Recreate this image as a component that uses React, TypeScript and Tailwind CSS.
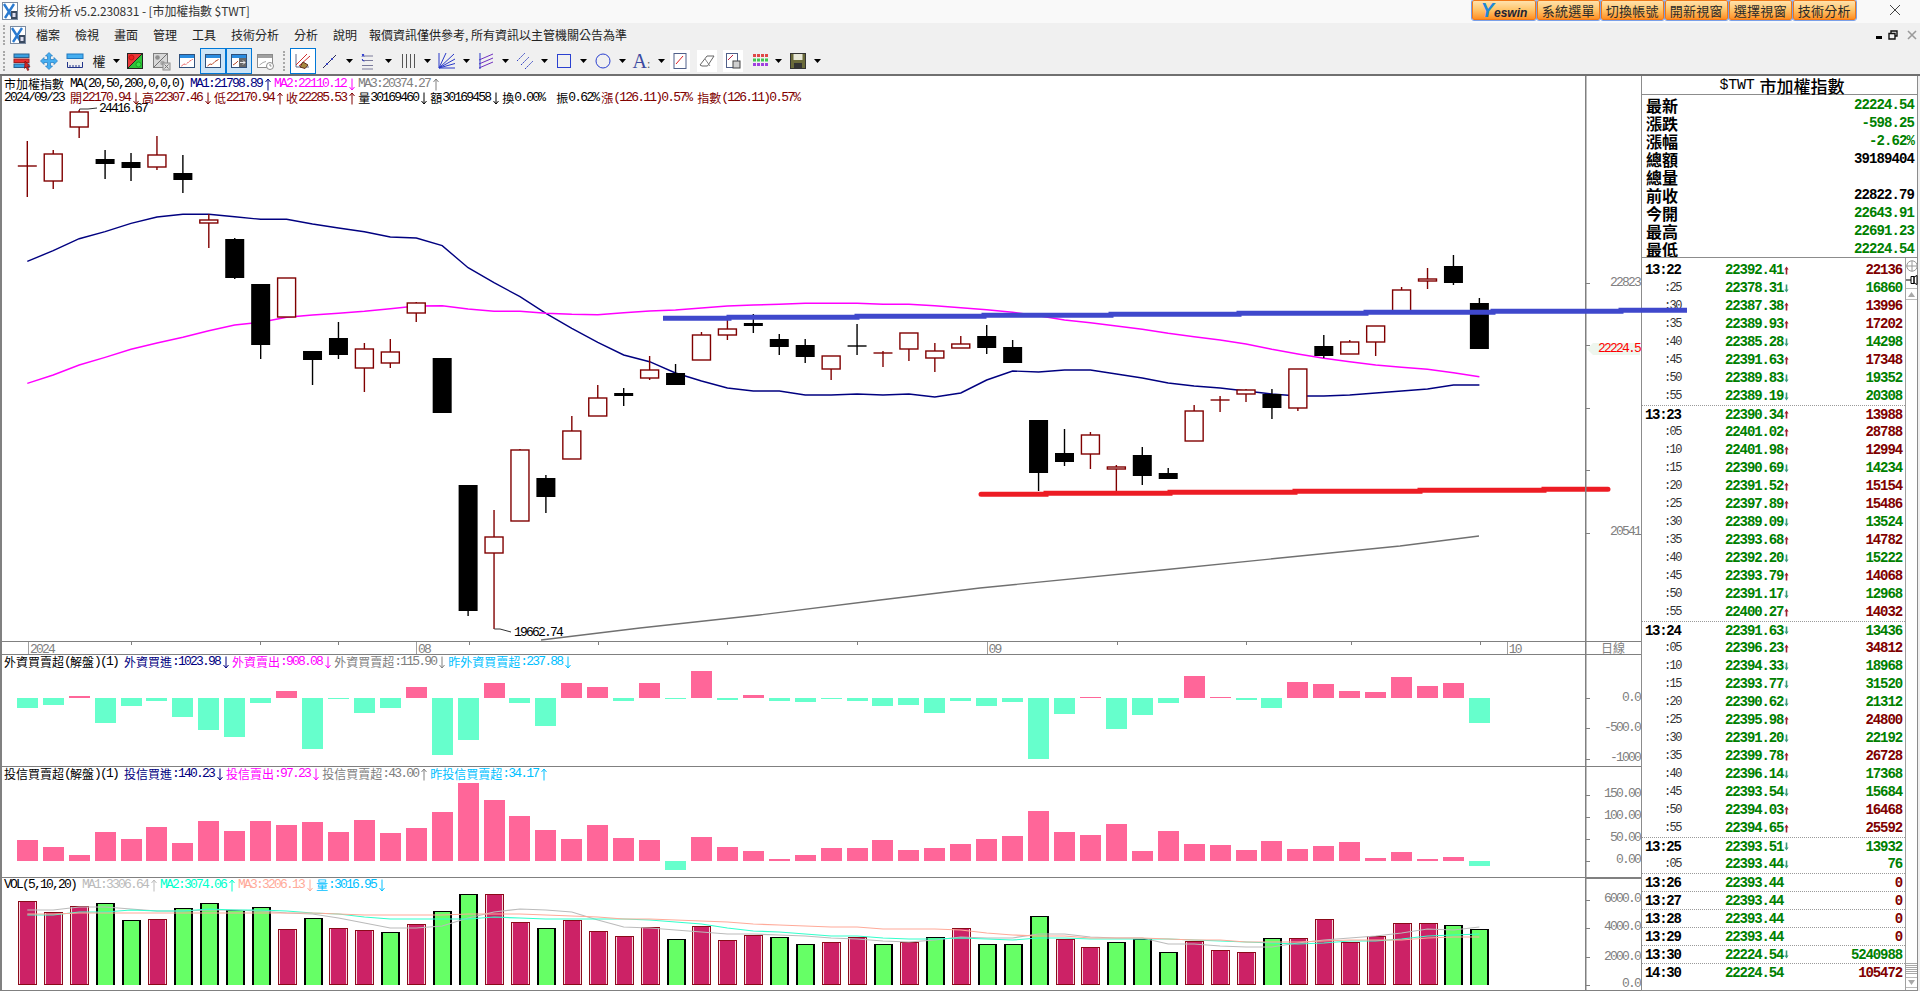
import type { ReactNode } from 'react';

const X = (i: number) => 27.3 + 25.93 * i;

type Candle = [number, number, number, number, 'r' | 'k'];

// high, body top, body bottom, low
const CANDLES: Candle[] = [
  [141, 166, 166, 197, 'r'], [150, 154, 181, 189, 'r'], [110, 112, 127, 138, 'r'], [150, 159, 164, 179, 'k'],
  [153, 162, 168, 181, 'k'], [136, 155, 167, 170, 'r'], [155, 173, 180, 193, 'k'], [214, 220, 223, 248, 'r'],
  [238, 239, 278, 279, 'k'], [284, 284, 345, 359, 'k'], [278, 278, 317, 317, 'r'], [351, 351, 360, 385, 'k'],
  [322, 338, 355, 359, 'k'], [343, 349, 368, 392, 'r'], [339, 352, 363, 368, 'r'], [302, 303, 313, 322, 'r'],
  [358, 358, 413, 413, 'k'], [485, 485, 611, 616, 'k'], [510, 537, 553, 629, 'r'], [449, 450, 521, 521, 'r'],
  [475, 478, 497, 513, 'k'], [416, 431, 459, 459, 'r'], [385, 398, 416, 416, 'r'], [388, 393, 396, 406, 'k'],
  [356, 370, 378, 380, 'r'], [364, 373, 385, 385, 'k'], [332, 335, 360, 360, 'r'], [320, 329, 335, 340, 'r'],
  [314, 323, 326, 333, 'k'], [334, 339, 347, 355, 'k'], [339, 345, 357, 363, 'k'], [356, 356, 369, 380, 'r'],
  [324, 346, 346, 355, 'k'], [351, 353, 353, 367, 'r'], [333, 333, 349, 361, 'r'], [343, 351, 358, 372, 'r'],
  [336, 344, 348, 348, 'r'], [325, 336, 348, 354, 'k'], [340, 347, 363, 363, 'k'], [420, 420, 473, 491, 'k'],
  [429, 453, 462, 466, 'k'], [432, 435, 454, 469, 'r'], [465, 467, 469, 491, 'r'], [447, 455, 476, 485, 'k'],
  [468, 473, 479, 479, 'k'], [405, 411, 441, 441, 'r'], [396, 400, 400, 412, 'r'], [389, 390, 394, 402, 'r'],
  [389, 394, 408, 419, 'k'], [369, 369, 408, 411, 'r'], [335, 346, 356, 358, 'k'], [340, 342, 354, 354, 'r'],
  [326, 326, 342, 356, 'r'], [287, 290, 312, 312, 'r'], [268, 279, 281, 289, 'r'], [255, 266, 283, 285, 'k'],
  [298, 303, 349, 349, 'k'],
];

const MA1 = [261.3, 250.7, 238.7, 231.7, 223.3, 217, 214.3, 214.3, 216.7, 219.3, 219.3, 224, 228, 231.7, 237, 238, 245.7, 267.7, 282.7, 296.7, 313.3, 328.3, 342.3, 355, 361.7, 373, 381, 388, 391, 391, 395, 395, 394, 395, 394, 397, 393, 380, 371, 372, 370, 370, 374, 378, 383, 386, 388, 391, 394, 396, 396, 395, 393, 391, 389, 385, 385];
const MA2 = [383.3, 375, 365, 357.3, 349.3, 343, 337.3, 330.7, 325, 322.3, 317.3, 315, 313.3, 311.3, 308.7, 306, 305.7, 309, 311.3, 311.3, 313.3, 314.3, 314.7, 312.7, 311, 310, 308, 306, 305, 304.3, 303.3, 303.3, 303.3, 304.3, 304.3, 305.7, 307.7, 309.7, 312.3, 315.7, 320, 322.7, 326, 329.3, 333.3, 336.7, 340, 344, 349.3, 354, 358.3, 361.7, 365, 367.3, 369.3, 372.7, 376.7];
const MA3 = '541,640 640,628 759,615 880,600 980,588 1162,570 1280,558 1400,546 1479,536';

const BLUE_STEPS = 'M663 318.3H729V317.3H857V316.3H984V315.3H1111V314.3H1239V313.3H1366V312.3H1493V311.3H1621V310.3H1687';
const RED_STEPS = 'M981 494.3H1046V493.3H1170V492.3H1295V491.3H1420V490.3H1544V489.3H1608';

// bar height in px, positive goes up from the zero line
const FOREIGN = [-10, -7, 2, -25, -8, -3, -19, -32, -39, -5, 7, -51, -1, -15, -10, 11, -57, -42, 15, -5, -28, 15, 11, -3, 15, -1, 27, -2, 3, -3, -4, -1, -3, -8, -7, -15, -3, -8, -4, -61, -16, 1, -31, -17, -5, 22, 1, -2, -10, 16, 14, 7, 6, 21, 12, 15, -25];
const TRUST = [21, 14, 6, 29, 22, 34, 18, 40, 30, 40, 36, 39, 29, 41, 28, 33, 49, 78, 61, 45, 31, 22, 36, 23, 21, -9, 24, 14, 10, 2, 6, 13, 13, 21, 11, 13, 17, 22, 25, 50, 29, 26, 37, 10, 30, 17, 16, 11, 20, 12, 15, 19, 3, 9, 2, 4, -5];

const VOL_TOPS = [901, 912, 906, 903, 920, 919, 908, 903, 910, 907, 929, 918, 928, 930, 932, 924, 911, 894, 894, 922, 928, 920, 931, 936, 927, 939, 926, 940, 935, 937, 944, 942, 937, 944, 942, 937, 928, 944, 944, 916, 939, 947, 942, 939, 952, 941, 950, 952, 938, 938, 919, 942, 936, 923, 923, 925, 929];
const VOL_GREEN = new Set([3, 4, 6, 7, 8, 9, 11, 14, 16, 17, 20, 25, 29, 30, 33, 35, 37, 38, 39, 42, 43, 44, 48, 55, 56]);
const VOL_MA1 = [910, 910, 907, 907, 909, 911, 911, 910, 910, 911, 913, 914, 918, 923, 928, 928, 926, 918, 912, 909, 910, 912, 920, 927, 928, 930, 932, 934, 934, 935, 936, 938, 939, 941, 942, 940, 937, 938, 938, 934, 934, 937, 938, 938, 944, 944, 946, 947, 947, 943, 940, 938, 936, 933, 929, 930, 927];
const VOL_MA2 = [915, 915, 912, 912, 910, 911, 911, 909, 910, 910, 911, 913, 914, 917, 919, 919, 919, 919, 917, 918, 919, 919, 919, 919, 920, 922, 924, 928, 931, 932, 934, 936, 936, 938, 939, 939, 938, 939, 940, 938, 938, 939, 939, 939, 939, 940, 941, 942, 943, 944, 943, 941, 941, 939, 936, 935, 934];
const VOL_MA3 = [914, 914, 913, 913, 913, 913, 913, 913, 913, 913, 913, 913, 914, 915, 915, 915, 915, 914, 914, 914, 915, 916, 917, 919, 919, 920, 921, 922, 924, 925, 926, 927, 927, 929, 929, 929, 930, 933, 935, 936, 936, 938, 938, 938, 939, 940, 940, 942, 942, 942, 941, 940, 940, 940, 938, 937, 937];

type Quote = [string, string, 'u' | 'd' | '', string];

const QUOTES: Quote[] = [
  ['13:22', '22392.41', 'u', '22136'], [':25', '22378.31', 'd', '16860'], [':30', '22387.38', 'u', '13996'], [':35', '22389.93', 'u', '17202'],
  [':40', '22385.28', 'd', '14298'], [':45', '22391.63', 'u', '17348'], [':50', '22389.83', 'd', '19352'], [':55', '22389.19', 'd', '20308'],
  ['13:23', '22390.34', 'u', '13988'], [':05', '22401.02', 'u', '28788'], [':10', '22401.98', 'u', '12994'], [':15', '22390.69', 'd', '14234'],
  [':20', '22391.52', 'u', '15154'], [':25', '22397.89', 'u', '15486'], [':30', '22389.09', 'd', '13524'], [':35', '22393.68', 'u', '14782'],
  [':40', '22392.20', 'd', '15222'], [':45', '22393.79', 'u', '14068'], [':50', '22391.17', 'd', '12968'], [':55', '22400.27', 'u', '14032'],
  ['13:24', '22391.63', 'd', '13436'], [':05', '22396.23', 'u', '34812'], [':10', '22394.33', 'd', '18968'], [':15', '22393.77', 'd', '31520'],
  [':20', '22390.62', 'd', '21312'], [':25', '22395.98', 'u', '24800'], [':30', '22391.20', 'd', '22192'], [':35', '22399.78', 'u', '26728'],
  [':40', '22396.14', 'd', '17368'], [':45', '22393.54', 'd', '15684'], [':50', '22394.03', 'u', '16468'], [':55', '22394.65', 'u', '25592'],
  ['13:25', '22393.51', 'd', '13932'], [':05', '22393.44', 'd', '76'], ['13:26', '22393.44', '', '0'], ['13:27', '22393.44', '', '0'],
  ['13:28', '22393.44', '', '0'], ['13:29', '22393.44', '', '0'], ['13:30', '22224.54', 'd', '5240988'], ['14:30', '22224.54', '', '105472'],
];

const SUMMARY: Array<[string, string, string]> = [
  ['最新', '22224.54', 'text-[#008000]'], ['漲跌', '-598.25', 'text-[#008000]'], ['漲幅', '-2.62%', 'text-[#008000]'],
  ['總額', '39189404', 'text-black'], ['總量', '', 'text-black'], ['前收', '22822.79', 'text-black'],
  ['今開', '22643.91', 'text-[#008000]'], ['最高', '22691.23', 'text-[#008000]'], ['最低', '22224.54', 'text-[#008000]'],
];

const MENU: Array<[string, string]> = [
  ['檔案', 'w-[39px]'], ['檢視', 'w-[39px]'], ['畫面', 'w-[39px]'], ['管理', 'w-[39px]'], ['工具', 'w-[39px]'],
  ['技術分析', 'w-[63px]'], ['分析', 'w-[39px]'], ['說明', 'w-[36px]'],
];

function HeadArrow({ dir }: { dir: string }) {
  return (
    <svg width={12} height={13} viewBox="0 0 12 13" className="inline-block shrink-0">
      {dir === '↑' ? (
        <path d="M6 1V12.5M3.5 4L6 1L8.5 4" fill="none" stroke="currentColor" />
      ) : (
        <path d="M6 0.5V12M3.5 9L6 12L8.5 9" fill="none" stroke="currentColor" />
      )}
    </svg>
  );
}

function Mixed({ text, className }: { text: string; className?: string }) {
  const parts = text.split(/([\u2190-\u2193]|[\u3000-\u9fff]+)/).filter(Boolean);
  return (
    <span className={`inline-flex items-center ${className ?? ''}`}>
      {parts.map((part, i) => {
        if (/^[\u2190-\u2193]$/.test(part)) return <HeadArrow key={i} dir={part} />;
        if (/^[\u3000-\u9fff]/.test(part)) {
          return (
            <span key={i} className="tracking-normal text-[12px] font-['Noto_Sans_CJK_TC',sans-serif]">
              {part}
            </span>
          );
        }
        return <span key={i}>{part}</span>;
      })}
    </span>
  );
}

function HeaderLine({ children }: { children: ReactNode }) {
  return (
    <div className="h-[14px] pl-[4px] flex items-center whitespace-pre text-[13px] leading-[14px] tracking-[-1.8px] font-['Liberation_Mono','Noto_Sans_CJK_TC',monospace]">
      {children}
    </div>
  );
}

function AxisText({ y, children, fill = '#808080' }: { y: number; children: string; fill?: string }) {
  return (
    <text x={1640} y={y} textAnchor="end" fill={fill} fontSize={13} letterSpacing={-1.8} className="font-['Liberation_Mono',monospace]">
      {children}
    </text>
  );
}

function Pane({ top, height, children, header }: { top: number; height: number; children: ReactNode; header?: ReactNode }) {
  return (
    <div className="relative shrink-0" style={{ height }}>
      <svg width={1641} height={height} viewBox={`0 ${top} 1641 ${height}`} className="block overflow-visible">
        {children}
        <rect x={0} y={top} width={2} height={height} fill="#808080" shapeRendering="crispEdges" />
        <rect x={1585} y={top} width={1.5} height={height} fill="#808080" />
        <rect x={0} y={top + height - 1} width={1641} height={1} fill="#808080" shapeRendering="crispEdges" />
      </svg>
      {header && <div className="absolute left-0 top-0">{header}</div>}
    </div>
  );
}

function Ticks({ ys }: { ys: number[] }) {
  return (
    <>
      {ys.map((y) => (
        <rect key={y} x={1586} y={y} width={4} height={1} fill="#808080" shapeRendering="crispEdges" />
      ))}
    </>
  );
}

function CandleMark({ c, i }: { c: Candle; i: number }) {
  const [high, top, bottom, low, tone] = c;
  const x = X(i);
  const color = tone === 'r' ? '#800000' : '#000000';
  if (top === bottom) {
    return (
      <g stroke={color} strokeWidth={1.4}>
        <line x1={x} x2={x} y1={high} y2={low} />
        <line x1={x - 9.5} x2={x + 9.5} y1={top} y2={top} />
      </g>
    );
  }
  return (
    <g>
      <line x1={x} x2={x} y1={high} y2={low} stroke={color} strokeWidth={1.4} />
      {tone === 'r' ? (
        <rect x={x - 9} y={top} width={18} height={bottom - top} fill="#fff" stroke={color} strokeWidth={1.4} />
      ) : (
        <rect x={x - 9.5} y={top} width={19} height={bottom - top} fill="#000" />
      )}
    </g>
  );
}

function Bars({ data, zero }: { data: number[]; zero: number }) {
  return (
    <>
      {data.map((v, i) => (
        <rect
          key={i}
          x={X(i) - 10.5}
          y={v > 0 ? zero - v : zero}
          width={21}
          height={Math.abs(v)}
          fill={v > 0 ? '#ff6699' : '#66ffcc'}
          shapeRendering="crispEdges"
        />
      ))}
    </>
  );
}

function line(data: number[]) {
  return data.map((y, i) => `${X(i).toFixed(1)},${y.toFixed(1)}`).join(' ');
}

function MainChart() {
  return (
    <Pane
      top={76}
      height={566}
      header={
        <div className="pt-[1px]">
          <HeaderLine>
            <Mixed text="市加權指數" className="text-black" />
            <Mixed text=" MA(20,50,200,0,0,0) " className="text-black" />
            <Mixed text="MA1:21798.89↑" className="text-[#000080]" />
            <Mixed text="MA2:22110.12↓" className="text-[#ff00ff]" />
            <Mixed text="MA3:20374.27↑" className="text-[#808080]" />
          </HeaderLine>
          <HeaderLine>
            <Mixed text="2024/09/23 " className="text-black" />
            <Mixed text="開22170.94↓高22307.46↓低22170.94↑收22285.53↑" className="text-[#800000]" />
            <Mixed text="量30169460↓額30169458↓換0.00%  振0.62%" className="text-black" />
            <Mixed text="漲(126.11)0.57% 指數(126.11)0.57%" className="ml-[3px] text-[#800000]" />
          </HeaderLine>
        </div>
      }
    >
      <polyline points={line(MA1)} fill="none" stroke="#000080" strokeWidth={1.4} />
      <polyline points={line(MA2)} fill="none" stroke="#ff00ff" strokeWidth={1.4} />
      <polyline points={MA3} fill="none" stroke="#707070" strokeWidth={1.3} />
      {CANDLES.map((c, i) => (
        <CandleMark key={i} c={c} i={i} />
      ))}
      <path d={RED_STEPS} fill="none" stroke="#ed1c24" strokeWidth={5} strokeLinecap="round" />
      <polyline points="79.6,110 79.6,109 88,109 97,108" fill="none" stroke="#333" />
      <text x={99} y={112} fontSize={13} letterSpacing={-1.8} className="font-['Liberation_Mono',monospace]">24416.67</text>
      <polyline points="494.3,629 500,629 511,632" fill="none" stroke="#333" />
      <text x={514} y={636} fontSize={13} letterSpacing={-1.8} className="font-['Liberation_Mono',monospace]">19662.74</text>
      <Ticks ys={[283, 345, 408, 470, 533]} />
      <polygon points="1587,349 1593,343 1640,343 1640,355 1593,355" fill="#eef6ee" />
      <AxisText y={286}>22823</AxisText>
      <AxisText y={352} fill="#ff0000">22224.5</AxisText>
      <AxisText y={535}>20541</AxisText>
    </Pane>
  );
}

function TimeAxis() {
  const shortTicks = [131, 260, 338, 468.6, 598, 727, 857, 1117, 1246, 1350.7, 1479.6];
  const months: Array<[number, string]> = [[28, '2024'], [416, '08'], [986.6, '09'], [1506.7, '10']];
  return (
    <Pane
      top={642}
      height={13}
      header={
        <div className="ml-[1601px] w-[24px] text-[12px] leading-[12px] text-[#808080] font-['Noto_Sans_CJK_TC',sans-serif]">
          日線
        </div>
      }
    >
      {shortTicks.map((x) => (
        <rect key={x} x={x} y={642} width={1} height={3} fill="#808080" shapeRendering="crispEdges" />
      ))}
      {months.map(([x, label]) => (
        <g key={label}>
          <rect x={x} y={642} width={1} height={13} fill="#a0a0a0" shapeRendering="crispEdges" />
          <text x={x + 2} y={653} fill="#808080" fontSize={13} letterSpacing={-1.8} className="font-['Liberation_Mono',monospace]">
            {label}
          </text>
        </g>
      ))}
    </Pane>
  );
}

function ForeignPane() {
  return (
    <Pane
      top={655}
      height={112}
      header={
        <HeaderLine>
          <Mixed text="外資買賣超(解盤)(1) " className="text-black" />
          <Mixed text="外資買進:1023.98↓" className="text-[#000080]" />
          <Mixed text="外資賣出:908.08↓" className="text-[#ff00ff]" />
          <Mixed text="外資買賣超:115.90↓" className="text-[#808080]" />
          <Mixed text="昨外資買賣超:237.88↓" className="text-[#00bfff]" />
        </HeaderLine>
      }
    >
      <Bars data={FOREIGN} zero={698} />
      <Ticks ys={[698, 728, 759]} />
      <AxisText y={701}>0.0</AxisText>
      <AxisText y={731}>-500.0</AxisText>
      <AxisText y={761}>-1000</AxisText>
    </Pane>
  );
}

function TrustPane() {
  return (
    <Pane
      top={767}
      height={111}
      header={
        <HeaderLine>
          <Mixed text="投信買賣超(解盤)(1) " className="text-black" />
          <Mixed text="投信買進:140.23↓" className="text-[#000080]" />
          <Mixed text="投信賣出:97.23↓" className="text-[#ff00ff]" />
          <Mixed text="投信買賣超:43.00↑" className="text-[#808080]" />
          <Mixed text="昨投信買賣超:34.17↑" className="text-[#00bfff]" />
        </HeaderLine>
      }
    >
      <Bars data={TRUST} zero={861} />
      <Ticks ys={[795, 817, 839, 861]} />
      <AxisText y={797}>150.00</AxisText>
      <AxisText y={819}>100.00</AxisText>
      <AxisText y={841}>50.00</AxisText>
      <AxisText y={863}>0.00</AxisText>
    </Pane>
  );
}

function VolPane() {
  return (
    <Pane
      top={878}
      height={113}
      header={
        <HeaderLine>
          <Mixed text="VOL(5,10,20) " className="text-black" />
          <Mixed text="MA1:3306.64↑" className="text-[#bbbbbb]" />
          <Mixed text="MA2:3074.06↑" className="text-[#00ffcc]" />
          <Mixed text="MA3:3206.13↓" className="text-[#ffaa99]" />
          <Mixed text="量:3016.95↓" className="text-[#00bfff]" />
        </HeaderLine>
      }
    >
      {VOL_TOPS.map((top, i) => {
        const left = Math.round(X(i) - 9);
        const h = 985 - top;
        return VOL_GREEN.has(i) ? (
          <g key={i} shapeRendering="crispEdges">
            <rect x={left} y={top} width={19} height={h} fill="#000" />
            <rect x={left + 2} y={top + 1} width={15} height={h - 1} fill="#66ff66" />
          </g>
        ) : (
          <g key={i} shapeRendering="crispEdges">
            <rect x={left} y={top} width={19} height={h} fill="#8b0a1a" />
            <rect x={left + 1} y={top + 1} width={17} height={h - 2} fill="#f6d6de" />
            <rect x={left + 2} y={top + 1} width={15} height={h - 2} fill="#cc2266" />
          </g>
        );
      })}
      <polyline points={line(VOL_MA1)} fill="none" stroke="#bbbbbb" strokeWidth={1.2} />
      <polyline points={line(VOL_MA2)} fill="none" stroke="#33ffcc" strokeWidth={1.2} />
      <polyline points={line(VOL_MA3)} fill="none" stroke="#ffaa99" strokeWidth={1.2} />
      <Ticks ys={[900, 928, 957, 985]} />
      <rect x={1586} y={878} width={55} height={1} fill="#808080" />
      <AxisText y={902}>6000.0</AxisText>
      <AxisText y={930}>4000.0</AxisText>
      <AxisText y={960}>2000.0</AxisText>
      <AxisText y={987}>0.0</AxisText>
    </Pane>
  );
}

function QuoteArrow({ dir }: { dir: 'u' | 'd' }) {
  const color = dir === 'u' ? '#a02030' : '#3a9a7a';
  return (
    <svg width={5} height={9} viewBox="0 0 5 9" className="ml-[1px] shrink-0">
      {dir === 'u' ? (
        <path d="M2.5 0.5L4.6 3.5H3.3V8.5H1.7V3.5H0.4Z" fill={color} />
      ) : (
        <path d="M2.5 8.5L4.6 5.5H3.3V0.5H1.7V5.5H0.4Z" fill={color} />
      )}
    </svg>
  );
}

function QuoteRow({ quote, index }: { quote: Quote; index: number }) {
  const [time, price, dir, vol] = quote;
  const isMinute = time.length > 3;
  const up = dir === 'u' || vol === '0' || time === '14:30';
  return (
    <div
      className={`flex items-center h-[18px] ${isMinute && index > 0 ? 'border-t border-dotted border-[#9a9a9a]' : ''}`}
    >
      {isMinute ? (
        <div className="w-[83px] pl-[3px] text-[14px] leading-none font-bold tracking-[-1.3px] text-black">{time}</div>
      ) : (
        <div className="w-[83px] pl-[22px] text-[12px] leading-none tracking-[-1.6px] text-[#333]">{time}</div>
      )}
      <div className="text-[14px] leading-none font-bold tracking-[-1.1px] text-[#008000]">{price}</div>
      {dir && <QuoteArrow dir={dir} />}
      <div className={`flex-1 pr-[3px] text-right text-[14px] leading-none font-bold tracking-[-1.1px] ${up ? 'text-[#800000]' : 'text-[#008000]'}`}>
        {vol}
      </div>
    </div>
  );
}

function ScrollColumn() {
  return (
    <div className="w-[12px] shrink-0 border-l border-[#a0a0a0] flex flex-col items-center bg-white">
      <svg width={12} height={13} viewBox="0 0 12 13" className="mt-[2px]">
        <circle cx={6} cy={6} r={5.2} fill="none" stroke="#999" />
        <path d="M0.5 6H11.5M6 0.5V11.5" stroke="#999" />
      </svg>
      <svg width={12} height={12} viewBox="0 0 12 12" className="mt-[1px]">
        <path d="M0 6H5M5 2.5H8V9.5H5ZM8 3L11 1.5V10.5L8 9Z" fill="#fff" stroke="#000" />
      </svg>
      <div className="mt-[2px] w-full h-[12px] border-y border-[#bbb] flex items-center justify-center">
        <svg width={7} height={5} viewBox="0 0 7 5"><path d="M3.5 0L7 5H0Z" fill="#a8a8a8" /></svg>
      </div>
      <div className="flex-1" />
      <div className="w-full h-[18px] flex flex-col justify-center gap-[1px]">
        {[0, 1, 2, 3, 4, 5].map((n) => (
          <div key={n} className="h-[1px] bg-[#a8a8a8]" />
        ))}
      </div>
      <div className="w-full h-[11px] mb-[2px] border-y border-[#bbb] flex items-center justify-center">
        <svg width={7} height={5} viewBox="0 0 7 5"><path d="M3.5 5L7 0H0Z" fill="#a8a8a8" /></svg>
      </div>
    </div>
  );
}

function QuotePanel() {
  return (
    <div className="w-[277px] shrink-0 border-x border-b border-[#8c8c8c] bg-white flex flex-col font-['Liberation_Mono','Noto_Sans_CJK_TC',monospace]">
      <div className="h-[19px] border-b border-[#8c8c8c] flex items-center justify-center leading-none font-bold text-black pl-[5px]">
        <span className="text-[15px] tracking-[-0.3px] font-normal">$TWT</span>
        <span className="ml-[5px] text-[17px] font-['Noto_Sans_CJK_TC',sans-serif] font-medium">市加權指數</span>
      </div>
      <div className="h-[162px] pl-[4px] pr-[3px] mt-[1px]">
        {SUMMARY.map(([label, value, color]) => (
          <div key={label} className="h-[18px] flex items-center justify-between">
            <span className="text-[16px] leading-none font-bold text-black font-['Noto_Sans_CJK_TC',sans-serif]">{label}</span>
            <span className={`text-[14px] leading-none font-bold tracking-[-0.9px] ${color}`}>{value}</span>
          </div>
        ))}
      </div>
      <div className="flex-1 flex min-h-0 border-t border-[#8c8c8c] mt-[-1px]">
        <div className="flex-1 min-w-0 pt-[3px]">
          {QUOTES.map((q, i) => (
            <QuoteRow key={i} quote={q} index={i} />
          ))}
        </div>
        <ScrollColumn />
      </div>
    </div>
  );
}

function Grip() {
  return (
    <div className="w-[3px] h-[20px] border-l-2 border-dotted border-[#a8a8a8]" />
  );
}

function Caret() {
  return (
    <svg width={7} height={4} viewBox="0 0 7 4" className="block">
      <path d="M0 0H7L3.5 4Z" fill="#000" />
    </svg>
  );
}

function Glyph({ children, w = 20 }: { children: ReactNode; w?: number }) {
  return (
    <svg width={w} height={20} viewBox="0 0 20 20" fill="none" className="block">
      {children}
    </svg>
  );
}

function WindowIcon({ children, gray = false }: { children?: ReactNode; gray?: boolean }) {
  return (
    <Glyph>
      <rect x={2.5} y={3.5} width={15} height={13} fill="#fff" stroke={gray ? '#8a8a8a' : '#30507a'} />
      <rect x={3} y={4} width={14} height={3} fill={gray ? '#a0a0a0' : '#2a8ce0'} />
      {children}
    </Glyph>
  );
}

// toolbar cells, widths keep each button at its place in the strip
const TOOLS: Array<{ w: string; icon: ReactNode; on?: boolean; white?: boolean }> = [
  { w: 'w-[26px]', icon: <Glyph><rect x={2} y={3} width={15} height={3.5} fill="#3aa0e0" stroke="#2a6090" /><rect x={2} y={8} width={15} height={3.5} fill="#e83030" stroke="#a02020" /><rect x={2} y={13} width={15} height={3.5} fill="#3aa0e0" stroke="#2a6090" /><path d="M13 10L18 15.5H15.5L17 19L15.5 19.5L14 16L12.5 17.5Z" fill="#d02828" stroke="#600" strokeWidth={0.5} /></Glyph> },
  { w: 'w-[28px]', icon: <Glyph><path d="M10 1.5L13.5 5H11.5V8.5H15V6.5L18.5 10L15 13.5V11.5H11.5V15H13.5L10 18.5L6.5 15H8.5V11.5H5V13.5L1.5 10L5 6.5V8.5H8.5V5H6.5Z" fill="#45aef0" stroke="#1f78c0" strokeWidth={0.7} /></Glyph> },
  { w: 'w-[24px]', icon: <Glyph><rect x={2} y={3} width={16} height={4.5} fill="#45aef0" stroke="#1f78c0" /><path d="M2.5 11V16.5H17.5V11M5 14V16.5M8 14V16.5M11 14V16.5M14 14V16.5" stroke="#22348a" /></Glyph> },
  { w: 'w-[24px]', icon: <span className="text-[13px] leading-none font-['Noto_Sans_CJK_TC',sans-serif] text-[#222]">權</span> },
  { w: 'w-[10px]', icon: <Caret /> },
  { w: 'w-[28px]', icon: <Glyph><rect x={2.5} y={2.5} width={15} height={15} fill="#e83a3a" stroke="#222" /><path d="M17.5 2.5V17.5H2.5Z" fill="#2ec23a" stroke="#222" /><circle cx={6.5} cy={6.5} r={2.5} fill="#f02020" stroke="#900" strokeWidth={0.5} /><circle cx={13.5} cy={13.5} r={2.5} fill="#38e048" stroke="#070" strokeWidth={0.5} /></Glyph> },
  { w: 'w-[24px]', icon: <Glyph><rect x={2.5} y={2.5} width={14} height={14} fill="#d8d8d8" stroke="#808080" /><path d="M16.5 2.5L2.5 16.5" stroke="#707070" /><circle cx={6.5} cy={6.5} r={2.3} fill="#909090" /><circle cx={11.5} cy={12} r={2.3} fill="#a8a8a8" /><rect x={12} y={12} width={7} height={7} fill="#ddd" stroke="#8a8a8a" /><path d="M13.5 13.5L17.5 17.5M17.5 13.5L13.5 17.5" stroke="#777" /></Glyph> },
  { w: 'w-[27px]', icon: <WindowIcon><path d="M4.5 15L7 13L9 13.5L12 10.5L15.5 8.5" stroke="#e02020" strokeDasharray="1.5 1" /></WindowIcon> },
  { w: 'w-[26px]', on: true, icon: <WindowIcon><path d="M4.5 15L7 13L9 13.5L12 10.5L15.5 8.5" stroke="#b84a2a" /></WindowIcon> },
  { w: 'w-[26px]', on: true, icon: <WindowIcon><path d="M4 14L7 12L9 10" stroke="#b84a2a" /><rect x={10} y={7} width={7} height={9} fill="#686868" /><path d="M11 11.5H16M14 9.5L16 11.5L14 13.5" stroke="#eee" /></WindowIcon> },
  { w: 'w-[26px]', icon: <WindowIcon gray><path d="M4.5 14L8 11.5L11 10.5" stroke="#a8a8a8" /><circle cx={15} cy={15} r={3.5} fill="#fff" stroke="#8a8a8a" /><path d="M15 13V15H16.5" stroke="#8a8a8a" /></WindowIcon> },
];

const DRAW_TOOLS: ReactNode[] = [
  <Glyph key="a"><path d="M3 9.5H14M3 5H14M3 14.5H14M3 18H14" stroke="#7a7a9a" /><path d="M3 3L5 5.5M5 3L3 5.5" stroke="#2030d0" /><path d="M3 8L5 10.5" stroke="#2030d0" /></Glyph>,
  <Glyph key="b"><path d="M4.5 3V17M8.5 3V17M12.5 3V17M16.5 3V17" stroke="#555" /></Glyph>,
  <Glyph key="c"><path d="M2 17V2M2 17H18M2 17L17 3M2 17L18 8M2 17L18 12.5M2 17L9 2" stroke="#2838c8" /></Glyph>,
  <Glyph key="d"><path d="M3 9L17 3M3 13L17 7M3 17L17 11" stroke="#7030c0" /><path d="M4 2V18" stroke="#2838c8" /></Glyph>,
  <Glyph key="e"><path d="M2 10L10 2M6 14L14 6M10 18L18 10" stroke="#3040c0" strokeDasharray="2 1" /></Glyph>,
  <Glyph key="f"><rect x={3.5} y={3.5} width={13} height={13} stroke="#2a40d0" /></Glyph>,
  <Glyph key="g"><circle cx={10} cy={10} r={7} stroke="#2a40d0" /></Glyph>,
  <span key="h" className="flex items-baseline text-[20px] leading-none text-[#3a4aa0] font-['Liberation_Serif',serif]">A<span className="text-[12px] text-[#555]">:</span></span>,
];

function Toolbar() {
  return (
    <div className="h-[27px] shrink-0 flex items-center pl-[3px]">
      <Grip />
      <div className="w-[3px]" />
      {TOOLS.map((t, i) => (
        <div
          key={i}
          className={`${t.w} h-[26px] flex items-center justify-center ${t.on ? 'bg-[#cce4f7] border border-[#0078d7]' : ''}`}
        >
          {t.icon}
        </div>
      ))}
      <div className="w-[12px] flex justify-center"><Grip /></div>
      <div className="w-[26px] h-[26px] flex items-center justify-center bg-white border border-[#0078d7]">
        <Glyph>
          <path d="M3 3V16H16" stroke="#606a8a" />
          <path d="M3 14L14 3M6 15L17 5" stroke="#d03030" />
          <path d="M7 16L10 11L15 14L12 17.5Z" fill="#a88a40" stroke="#603020" />
        </Glyph>
      </div>
      <div className="w-[28px] flex justify-center">
        <Glyph>
          <path d="M3 17L16 4" stroke="#2a2a5a" />
          <circle cx={7} cy={13} r={1} fill="#2030d0" />
          <circle cx={12} cy={8} r={1} fill="#2030d0" />
        </Glyph>
      </div>
      {DRAW_TOOLS.map((icon, i) => (
        <div key={i} className="flex items-center">
          <div className="w-[10px] flex justify-center"><Caret /></div>
          <div className="w-[29px] flex justify-center">{icon}</div>
        </div>
      ))}
      <div className="w-[10px] flex justify-center"><Caret /></div>
      <div className="w-[28px] flex justify-center">
        <div className="w-[20px] h-[22px] bg-white flex items-center justify-center">
          <Glyph>
            <rect x={4} y={2.5} width={12} height={15} stroke="#50608a" fill="#fff" />
            <path d="M6 13L13 5" stroke="#e02020" />
          </Glyph>
        </div>
      </div>
      <div className="w-[26px] flex justify-center">
        <div className="w-[20px] h-[22px] bg-white flex items-center justify-center">
          <Glyph>
            <path d="M3 14L10 5H17L10.5 15H5Z" stroke="#666" fill="#fff" />
            <path d="M8 8L13 15" stroke="#888" />
          </Glyph>
        </div>
      </div>
      <div className="w-[26px] flex justify-center">
        <div className="w-[20px] h-[22px] bg-white flex items-center justify-center">
          <Glyph>
            <rect x={3.5} y={2.5} width={11} height={14} stroke="#50608a" fill="#fff" />
            <path d="M5 9L10 4" stroke="#c02040" />
            <rect x={10} y={10} width={7} height={7} fill="#d0d0d0" stroke="#444" />
          </Glyph>
        </div>
      </div>
      <div className="w-[27px] flex justify-center">
        <Glyph>
          {[3, 7.5, 12].map((y, r) =>
            [3, 7, 11, 15].map((x, c) => (
              <rect key={`${r}${c}`} x={x} y={y} width={3} height={3} fill={['#e04848', '#40c850', '#a040e0'][r]} />
            )),
          )}
        </Glyph>
      </div>
      <div className="w-[10px] flex justify-center"><Caret /></div>
      <div className="w-[29px] flex justify-center">
        <Glyph>
          <rect x={2.5} y={2.5} width={15} height={15} fill="#6a6a3a" stroke="#333" />
          <rect x={5.5} y={3} width={9} height={6} fill="#e8e8d8" />
          <rect x={6} y={12} width={8} height={5.5} fill="#333" />
        </Glyph>
      </div>
      <div className="w-[10px] flex justify-center"><Caret /></div>
    </div>
  );
}

function AppLogo() {
  return (
    <svg width={16} height={18} viewBox="0 0 16 18" className="block shrink-0">
      <rect x={0.5} y={0.5} width={15} height={17} fill="#fff" stroke="#7a8aa0" />
      <path d="M2 2L11 16M12 2L3 16" stroke="#2a7ad0" strokeWidth={2.4} />
      <rect x={9} y={9} width={6} height={8} fill="#3a4a60" />
      <rect x={10.5} y={11} width={3} height={4} fill="#dde" />
    </svg>
  );
}

function OrangeButton({ children, w }: { children: ReactNode; w: string }) {
  return (
    <div className={`${w} h-[20px] shrink-0 flex items-center justify-center rounded-[2px] border border-[#f07818] outline outline-[#7aa0e8] outline-offset-0 bg-gradient-to-b from-[#ffe2ac] via-[#ffc468] to-[#ff8e1c] text-[13px] leading-none text-[#2a2a2a] tracking-[0.3px] font-['Noto_Sans_CJK_TC',sans-serif]`}>
      {children}
    </div>
  );
}

function TitleBar() {
  return (
    <div className="h-[23px] shrink-0 flex bg-[#f9f9f9] relative">
      <div className="flex items-center pl-[2px] pb-[2px]">
        <AppLogo />
        <span className="ml-[6px] text-[12px] leading-none tracking-[-0.1px] text-[#333] font-['Noto_Sans_CJK_TC',sans-serif]">
          技術分析 v5.2.230831 - [市加權指數 $TWT]
        </span>
      </div>
      <div className="ml-auto flex items-start gap-[0.5px] pr-[64px]">
        <OrangeButton w="w-[64px]">
          <span className="font-['Liberation_Sans',sans-serif] italic font-bold text-[12px] tracking-normal">
            <span className="text-[20px] text-[#1e88d8] leading-none">Y</span>
            <span className="text-[#223]">eswin</span>
          </span>
        </OrangeButton>
        {['系統選單', '切換帳號', '開新視窗', '選擇視窗', '技術分析'].map((label) => (
          <OrangeButton key={label} w="w-[63.5px]">{label}</OrangeButton>
        ))}
      </div>
      <svg width={12} height={12} viewBox="0 0 12 12" className="absolute left-[1889px] top-[4px]">
        <path d="M1 1L11 11M11 1L1 11" stroke="#444" strokeWidth={1} />
      </svg>
    </div>
  );
}

function MenuBar() {
  return (
    <div className="h-[24px] shrink-0 flex items-center relative pl-[3px] text-[12px] leading-none text-[#222] font-['Noto_Sans_CJK_TC',sans-serif]">
      <Grip />
      <div className="ml-[4px] mr-[10px]">
        <AppLogo />
      </div>
      {MENU.map(([label, w]) => (
        <div key={label} className={w}>{label}</div>
      ))}
      <div>報價資訊僅供參考, 所有資訊以主管機關公告為準</div>
      <div className="ml-auto flex items-center gap-[6px] pr-[3px]">
        <div className="w-[6px] h-[3px] bg-black mt-[5px]" />
        <svg width={10} height={10} viewBox="0 0 10 10">
          <path d="M3 3V1H9V6H7M1 3.5H7V9H1Z" fill="none" stroke="#111" strokeWidth={1.4} />
        </svg>
        <svg width={10} height={10} viewBox="0 0 10 10" className="ml-[3px]">
          <path d="M1 1L9 9M9 1L1 9" stroke="#9a9a9a" strokeWidth={1.6} />
        </svg>
      </div>
    </div>
  );
}

export default function App() {
  return (
    <div className="relative w-[1920px] h-[991px] overflow-hidden flex flex-col bg-[#f0f0f0]">
      <TitleBar />
      <MenuBar />
      <Toolbar />
      <div className="h-[2px] shrink-0 bg-[#707070]" />
      <div className="flex-1 flex min-h-0">
        <div className="w-[1641px] shrink-0 flex flex-col bg-white">
          <MainChart />
          <TimeAxis />
          <ForeignPane />
          <TrustPane />
          <VolPane />
        </div>
        <QuotePanel />
      </div>
      {/* hand-drawn trend line, runs over the quote panel */}
      <svg width={1700} height={330} className="absolute left-0 top-0 pointer-events-none">
        <path d={BLUE_STEPS} fill="none" stroke="#3f48cc" strokeWidth={5} />
      </svg>
    </div>
  );
}
